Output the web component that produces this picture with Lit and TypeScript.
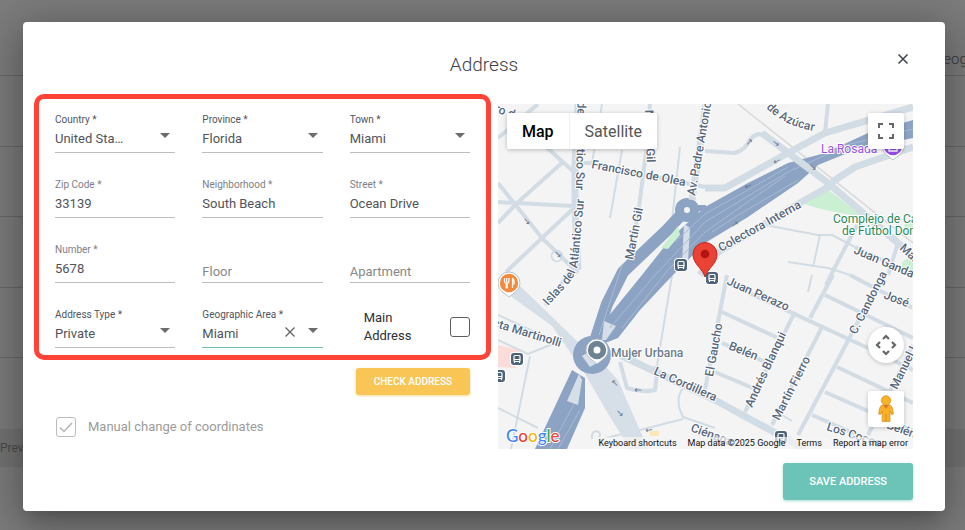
import { LitElement, html, svg, css } from "lit";
import { customElement, property } from "lit/decorators.js";

type Label = [text: string, x: number, y: number, angle: number, anchor?: string];

/* Street geometry, grouped by stroke weight. */
const THIN_ROADS = [
  "M602 104L592 163", "M622 150L610 218", "M680 147L672 220",
  "M765 225L818 235H832L855 247", "M820 235L813 267", "M788 262L828 268L850 275",
  "M812 275L808 292", "M530 356L511 449", "M498 408L538 428", "M498 340L528 354L555 343",
  "M672 275L657 366Q648 372 620 356", "M683 388Q674 400 683 417L715 428",
  "M683 419L640 430L597 440", "M782 415L792 421", "M498 315L535 332",
];
const ROADS = [
  "M498 183L542 238L578 273", "M563 162L517 203L498 223", "M498 202L517 203L573 206",
  "M545 146L574 172", "M575 207L542 238L506 272", "M498 138L538 104",
  "M574 163H590L690 184L705 187", "M650 104L647 145L638 215L628 262",
  "M828 103L825 133", "M855 247L913 275", "M857 225L835 267L826 285", "M898 243L888 275",
  "M725 282L868 348L913 370", "M727 275L705 390", "M722 312L778 338", "M722 343L765 362",
  "M715 372L755 389", "M795 312L745 412", "M823 325L772 425", "M833 275L810 318",
  "M882 275L850 337L798 435", "M825 295L913 338", "M850 275L913 308", "M837 367L913 403",
  "M825 392L913 431", "M812 415L890 449", "M913 345L868 435", "M545 305L553 296L572 268",
  "M620 362L627 388Q642 393 655 390L658 366", "M705 151L735 153Q745 150 750 140Q757 130 768 137",
];
const WIDE_ROADS = [
  "M578 104L575 165V207L578 270", "M706 104L692 200", "M705 188H725L788 153L825 133L913 107",
  "M762 133L828 183L898 243L913 257", "M832 182L855 167L913 147", "M830 186L798 204L715 254L700 275",
  "M620 355L715 400L805 449",
];

const HIGHWAY = [
  "M913 120L868 133L825 153L788 163L748 183L705 207L672 237L642 275L607 318L600 345L618 338L640 310L672 276L705 243L748 217L798 183L818 165L855 150L913 138Z",
  "M572 370L535 449H567L585 408V378Z",
];
const LANES = [
  "M913 129L850 144L788 172L705 222L655 275L610 328", "M785 176L705 232L668 270L622 328",
  "M788 167L748 190L705 214L675 242", "M622 265L610 302L599 335", "M580 410L558 449", "M574 404L550 449",
  "M798 180L740 214L712 232",
];

const STREETS: Label[] = [
  ["Francisco de Olea", 591, 168, 11],
  ["Martín Gil", 633, 260, -79],
  ["Martín Gil", 645, 110, 88],
  ["Islas del Atlántico Sur", 576, 190, 91, "end"],
  ["Av. Padre Antonio", 695, 196, -80],
  ["Colectora Interna", 721, 252, -29],
  ["Juan Gandasegui", 853, 253, 23],
  ["Mar Chiquita", 899, 249, 42],
  ["Juan Perazo", 726, 284, 24],
  ["José Villegas", 883, 298, 21],
  ["C. Candonga", 856, 335, -63],
  ["Manuel Lucero", 897, 390, -64],
  ["Andrés Blanqui", 752, 408, -65],
  ["Martín Fierro", 779, 421, -63],
  ["El Gaucho", 713, 377, -80],
  ["Belén", 728, 349, 22],
  ["Belén", 886, 428, 20],
  ["Los Cocos", 826, 430, 18],
  ["Ciénaga", 690, 431, 20],
  ["La Cordillera", 653, 374, 24],
  ["Recta Martinolli", 560, 347, 17, "end"],
  ["Cerro de", 498, 113, 20, "middle"],
];

const ARROWS: Label[] = [
  ["→", 527, 221, 52], ["→", 558, 254, 45], ["→", 749, 142, -50], ["→", 776, 143, 40],
  ["←", 777, 161, -25], ["←", 748, 186, -20], ["←", 615, 383, 50], ["←", 638, 390, 2],
  ["→", 620, 413, 45], ["←", 649, 430, -10], ["→", 735, 224, -40], ["→", 813, 167, 45],
];

@customElement("address-map")
export class AddressMap extends LitElement {
  static styles = css`
    :host { display: block; position: relative; height: 345px; overflow: hidden; background: #f5f4f5; font-family: Roboto, "Noto Sans", sans-serif; }
    .canvas { display: block; width: 100%; height: 100%; }
    .road { fill: none; stroke: #d2dce4; stroke-linejoin: round; }
    .w2 { stroke-width: 2; }
    .w4 { stroke-width: 4; }
    .w7 { stroke-width: 7; }
    .highway { fill: #8ca3c4; }
    .ramp { fill: none; stroke: #8ca3c4; }
    .lane { fill: none; stroke: #a9bad4; stroke-width: 1; }
    .street { font-size: 12px; font-weight: 500; fill: #56677c; stroke: #fff; stroke-width: 2px; paint-order: stroke; stroke-linejoin: round; }
    .park { fill: #28895a; font-weight: 400; }
    .shop { fill: #9350e6; font-weight: 400; }
    .poi { fill: #6b7d8b; }
    .arrow { font: 9px "DejaVu Sans", sans-serif; fill: #68788a; text-anchor: middle; dominant-baseline: central; }
    button { border: 0; padding: 0; margin: 0; background: #fff; font: inherit; color: #565656; }
    .types { position: absolute; left: 9px; top: 9px; display: flex; height: 36px; box-shadow: 0 1px 4px rgba(0, 0, 0, 0.25); border-radius: 2px; overflow: hidden; font-size: 16px; }
    .types button { padding: 0 15px; }
    .types button:first-child { font-weight: 500; color: #000; border-right: 1px solid #eee; }
    .tools { position: absolute; top: 9px; right: 9px; bottom: 22px; display: flex; flex-direction: column; gap: 28px; }
    .tools button { display: grid; place-items: center; width: 36px; height: 36px; border-radius: 2px; box-shadow: 0 1px 4px rgba(0, 0, 0, 0.22); }
    .tools .camera { margin-top: auto; border-radius: 50%; }
    .logo { position: absolute; left: 8px; bottom: 3px; font: 500 17px/20px Lato, sans-serif; -webkit-text-stroke: 2px #fff; paint-order: stroke; text-decoration: none; }
    .b { color: #4285f4; } .r { color: #ea4335; } .y { color: #f2b50a; } .g { color: #34a853; }
    .legal { position: absolute; right: 0; bottom: 0; display: flex; gap: 11px; padding: 0 5px; font-size: 9px; line-height: 12px; background: rgba(245, 245, 245, 0.7); }
    .legal a, .legal button, .legal span { color: #111; text-decoration: none; background: none; white-space: nowrap; }
  `;

  private label(cls: string, [text, x, y, angle, anchor = "start"]: Label) {
    return svg`<text class=${cls} text-anchor=${anchor} transform="translate(${x} ${y}) rotate(${angle})">${text}</text>`;
  }

  private bus(x: number, y: number) {
    return svg`<g transform="translate(${x} ${y})">
      <rect x="-7" y="-7" width="14" height="14" rx="4" fill="#fff"></rect>
      <rect x="-6" y="-6" width="12" height="12" rx="3" fill="#4d6379"></rect>
      <rect x="-3" y="-3.5" width="6" height="6" rx="1" fill="none" stroke="#fff" stroke-width="1.2"></rect>
      <path d="M-3 0.5H3M-2.5 2V4M2.5 2V4" stroke="#fff" stroke-width="1.2"></path>
    </g>`;
  }

  private pin(x: number, y: number, color: string, glyph: unknown) {
    return svg`<g transform="translate(${x} ${y})">
      <path d="M0 14L-7 8.5A11 11 0 1 1 7 8.5Z" fill="#fff" stroke="#aab2ba" stroke-width=".8"></path>
      <circle r="9.2" fill=${color}></circle>${glyph}
    </g>`;
  }

  render() {
    const lines = (paths: string[], cls: string) => paths.map((d) => svg`<path class=${cls} d=${d}></path>`);
    return html`
      <svg class="canvas" viewBox="498 104 415 345" preserveAspectRatio="xMidYMid slice" role="img" aria-label="Map of the address">
        <path d="M498 345L520 350L516 368L498 367Z" fill="#fbdcd8"></path>
        <path d="M802 203L826 188L862 216Q825 212 802 203Z" fill="#cbefd3"></path>
        <path d="M904 225L913 220V234H906ZM902 262L913 255V275L902 268Z" fill="#cbefd3"></path>
        <path d="M650 431h9v5h-9z" fill="#fbe6b8"></path>
        <path d="M738 104L913 243" stroke="#d8d8d8" stroke-width="1.5"></path>
        ${lines(THIN_ROADS, "road w2")} ${lines(ROADS, "road w4")}
        <path d="M505 284L520 286L578 342L584 362L574 358L552 326L505 292Z" fill="#d6dfe7"></path>
        <path d="M584 372L605 366L618 380L648 449H630L607 412Z" fill="#d6dfe7"></path>
        ${lines(HIGHWAY, "highway")}
        <path class="ramp" stroke-width="12" d="M680 216L667 230L623 272L607 304L596 338"></path>
        <path class="ramp" stroke-width="6" d="M690 208H706"></path>
        <circle cx="687" cy="210" r="12" fill="#8ca3c4"></circle>
        <circle cx="687" cy="210" r="3" fill="#f4f3f4"></circle>
        <circle cx="592" cy="355" r="19" fill="#8ca3c4"></circle>
        <path d="M684 224L690 228L688 262H682Z" fill="#d6dfe7"></path>
        <path d="M678 226L680 235L668 249L661 248Z" fill="#cbefd3"></path>
        <path d="M604 321L616 326L606 340H602Z" fill="#d6dfe7"></path>
        <path d="M579 374L567 401L578 405L582 380Z" fill="#d6dfe7"></path>
        <path d="M582 356L592 350L602 360L590 367Z" fill="#d6dfe7"></path>
        ${lines(LANES, "lane")} ${lines(WIDE_ROADS, "road w7")}
        <circle cx="557" cy="256" r="5.5" fill="none" stroke="#d0dae2" stroke-width="1.5"></circle>
        <path d="M592 439q-1-7 4-8 6 1 3 7" fill="none" stroke="#d0dae2" stroke-width="2"></path>
        ${ARROWS.map((a) => this.label("arrow", a))}
        ${STREETS.map((s) => this.label("street", s))}
        <path id="islas" d="M548 306L569 283Q577 273 578 262L585 190" fill="none"></path>
        <text class="street"><textPath href="#islas">Islas del Atlántico Sur</textPath></text>
        <path id="azucar" d="M766 108Q788 130 830 133" fill="none"></path>
        <text class="street"><textPath href="#azucar">de Azúcar</textPath></text>
        <text class="street shop" x="821" y="153">La Rosada</text>
        <text class="street park" x="833" y="223">Complejo de Canchas</text>
        <text class="street park" x="842" y="235">de Fútbol Domingo</text>
        <text class="street poi" x="611" y="357">Mujer Urbana</text>
        ${this.bus(681, 265)} ${this.bus(712, 278)} ${this.bus(517, 359)} ${this.bus(499, 376)} ${this.bus(781, 437)}
        ${this.pin(893, 146, "#9350e6", svg`<path d="M-4 5V-1H4V5Z M-2 -1a2 2 0 0 1 4 0" fill="none" stroke="#fff" stroke-width="1.3"></path>`)}
        ${this.pin(509, 283, "#f58a3c", svg`<path d="M-4.5-5v3q0 2 1.700 2V5h1V0q1.700 0 1.700-2V-5M-2.300-5V-1M3.500-5V5M3.500-5q2 2 1.500 6h-1.500" fill="none" stroke="#fff" stroke-width="1.200"></path>`)}
        ${this.pin(597, 350, "#6d8593", svg`<circle r="3.500" fill="#fff"></circle>`)}
        <path d="M705 277C703 269 693 264 693 254.500A12 12 0 0 1 717 254.500C717 264 707 269 705 277Z" fill="#ea4335" stroke="#c5221f" stroke-width="1"></path>
        <circle cx="705" cy="254" r="4.300" fill="#b31412"></circle>
      </svg>
      <div class="types"><button>Map</button><button>Satellite</button></div>
      <div class="tools">
        <button aria-label="Full screen">
          <svg width="18" height="18" fill="none" stroke="#666" stroke-width="2"><path d="M2 6V2H6M12 2H16V6M16 12V16H12M6 16H2V12"></path></svg>
        </button>
        <button class="camera" aria-label="Camera controls">
          <svg width="22" height="22" fill="none" stroke="#666" stroke-width="2.200"><path d="M8 5L11 2L14 5M8 17L11 20L14 17M5 8L2 11L5 14M17 8L20 11L17 14"></path></svg>
        </button>
        <button aria-label="Street View">
          <svg width="16" height="28" viewBox="0 0 16 28">
            <path d="M4 10H12Q14 11 14.500 14L15.300 19L13.500 19.500L12 16V26.500H4.200V16L2.600 19.500L.7 19L1.500 14Q2 11 4 10Z" fill="#f9b125" stroke="#d48a1b" stroke-width=".7"></path>
            <circle cx="8" cy="5.500" r="4.700" fill="#f9b125" stroke="#d48a1b" stroke-width=".7"></circle>
            <path d="M5 10H11L8 14Z" fill="#e3742f"></path><path d="M8 19V26" stroke="#d48a1b"></path>
          </svg>
        </button>
      </div>
      <a class="logo" href="#" aria-label="Google"><span class="b">G</span><span class="r">o</span><span class="y">o</span><span class="b">g</span><span class="g">l</span><span class="r">e</span></a>
      <div class="legal">
        <button>Keyboard shortcuts</button><span>Map data ©2025 Google</span><a href="#">Terms</a><a href="#">Report a map error</a>
      </div>
    `;
  }
}

@customElement("form-field")
export class FormField extends LitElement {
  @property() label = "";
  @property() value = "";
  @property() kind: "text" | "select" = "text";
  @property({ type: Boolean }) clearable = false;

  static styles = css`
    :host { display: block; min-width: 0; font-family: Roboto, "Noto Sans", sans-serif; }
    .field { position: relative; display: flex; flex-direction: column; box-sizing: border-box; height: 42px; padding-top: 2px; border-bottom: 1px solid #bdbdbd; }
    .active { border-color: #6dbfb0; }
    label { font-size: 10px; line-height: 14px; color: #7d8085; white-space: nowrap; }
    .select label { color: #50545c; }
    input, select { appearance: none; flex: none; box-sizing: border-box; width: 100%; height: 24px; margin: 0; padding: 0; border: 0; border-radius: 0; outline: 0; background: none; font: 13px/24px Roboto, "Noto Sans", sans-serif; color: #50535a; }
    input::placeholder { color: #85888c; opacity: 1; }
    .empty { justify-content: flex-end; }
    .empty input { height: 20px; line-height: 20px; }
    select { padding-right: 50px; text-overflow: ellipsis; white-space: nowrap; overflow: hidden; }
    .select::after { content: ""; position: absolute; right: 5px; top: 22px; border: 5px solid transparent; border-top-color: #6c6c6c; border-bottom: 0; pointer-events: none; }
    button { position: absolute; right: 27px; top: 20px; width: 12px; height: 12px; padding: 0; border: 0; background: none; }
    button svg { display: block; }
  `;

  render() {
    if (this.kind === "select") {
      return html`<div class="field select ${this.clearable ? "active" : ""}">
        <label for="control">${this.label}</label>
        <select id="control"><option>${this.value}</option></select>
        ${this.clearable
          ? html`<button aria-label="Clear"><svg width="12" height="12" stroke="#666" stroke-width="1.400"><path d="M1.500 1.500L10.500 10.500M10.500 1.500L1.500 10.500"></path></svg></button>`
          : ""}
      </div>`;
    }
    return this.value
      ? html`<div class="field"><label for="control">${this.label}</label><input id="control" .value=${this.value} /></div>`
      : html`<div class="field empty"><input aria-label=${this.label} placeholder=${this.label} /></div>`;
  }
}

@customElement("app-root")
export class AppRoot extends LitElement {
  static styles = css`
    :host { display: grid; min-height: 100vh; font-family: Roboto, "Noto Sans", sans-serif; overflow: hidden; }
    .page, .dialog { grid-area: 1 / 1; min-width: 0; }
    .page { background: #7d7d7d; color: #36383b; font-size: 15px; overflow: hidden; }
    .head { display: flex; justify-content: flex-end; align-items: flex-end; height: 76px; box-sizing: border-box; padding-bottom: 5px; line-height: 22px; border-bottom: 1px solid #686868; font-weight: 300; }
    .head span { width: 32px; white-space: nowrap; }
    .row { height: 70px; border-bottom: 1px solid #686868; box-sizing: border-box; }
    .row:nth-of-type(odd) { height: 71px; }
    .row:last-of-type { border: 0; }
    .pager { height: 38px; line-height: 38px; background: #747474; font-size: 12px; color: #4b4b4b; }
    .dialog { position: relative; display: flex; flex-direction: column; box-sizing: border-box; margin: 22px 20px 19px 23px; padding: 0 32px 11px 11px; background: #fff; border-radius: 4px; box-shadow: 0 11px 15px -7px rgba(0, 0, 0, 0.2), 0 9px 46px 8px rgba(0, 0, 0, 0.3); }
    h1 { margin: 32px 0 18px 21px; text-align: center; font-size: 19px; line-height: 22px; font-weight: 300; color: #3d424b; }
    .close { position: absolute; top: 31px; right: 36px; width: 12px; height: 12px; padding: 0; border: 0; background: none; }
    .close svg { display: block; }
    .body { display: grid; grid-template-columns: minmax(0, 457fr) minmax(0, 415fr); column-gap: 7px; }
    address-map { margin-top: 10px; }
    .fields { display: grid; grid-template-columns: repeat(3, minmax(0, 1fr)); column-gap: 27px; row-gap: 23px; padding: 12px 16px 7px; border: 5px solid #ff4336; border-radius: 10px; }
    .main { display: flex; justify-content: space-between; align-items: center; padding-left: 14px; font-size: 13px; line-height: 18px; color: #2c2f33; }
    .main span { width: 56px; }
    input { appearance: none; flex: none; width: 20px; height: 20px; margin: 0; border: 1px solid #5e5e5e; border-radius: 3px; background: #fff; }
    .tick { display: grid; }
    .tick input, .tick svg { grid-area: 1 / 1; }
    .tick input { border-color: #bcbcbc; }
    .action { border: 0; border-radius: 3px; color: #fff; font-family: inherit; font-weight: 500; }
    .check { display: block; height: 27px; margin: 8px 21px 0 auto; padding: 0 18px; font-size: 10px; background: #f9c555; box-shadow: 0 1px 3px rgba(249, 197, 85, 0.6); }
    .manual { display: flex; align-items: center; gap: 12px; margin: 22px 0 0 22px; font-size: 13px; line-height: 20px; color: #9b9b9b; }
    .save { align-self: flex-end; height: 37px; margin-top: 14px; padding: 0 26px; font-size: 11px; background: #6cc3b7; box-shadow: 0 1px 3px rgba(108, 195, 183, 0.6); }
  `;

  render() {
    return html`
      <div class="page">
        <header class="head"><span>Geographic</span></header>
        <div class="row"></div><div class="row"></div><div class="row"></div><div class="row"></div><div class="row"></div>
        <footer class="pager">Previous</footer>
      </div>
      <main class="dialog" role="dialog" aria-labelledby="title">
        <button class="close" aria-label="Close">
          <svg width="12" height="12" stroke="#3d424b" stroke-width="1.500"><path d="M1.500 1.500L10.500 10.500M10.500 1.500L1.500 10.500"></path></svg>
        </button>
        <h1 id="title">Address</h1>
        <div class="body">
          <form @submit=${(e: Event) => e.preventDefault()}>
            <div class="fields">
              <form-field kind="select" label="Country *" value="United States"></form-field>
              <form-field kind="select" label="Province *" value="Florida"></form-field>
              <form-field kind="select" label="Town *" value="Miami"></form-field>
              <form-field label="Zip Code *" value="33139"></form-field>
              <form-field label="Neighborhood *" value="South Beach"></form-field>
              <form-field label="Street *" value="Ocean Drive"></form-field>
              <form-field label="Number *" value="5678"></form-field>
              <form-field label="Floor"></form-field>
              <form-field label="Apartment"></form-field>
              <form-field kind="select" label="Address Type *" value="Private"></form-field>
              <form-field kind="select" label="Geographic Area *" value="Miami" clearable></form-field>
              <label class="main"><span>Main Address</span><input type="checkbox" /></label>
            </div>
            <button class="action check">CHECK ADDRESS</button>
            <label class="manual">
              <span class="tick"><input type="checkbox" checked disabled />
                <svg width="20" height="20" fill="none" stroke="#b5b5b5" stroke-width="1.500"><path d="M4 10.500L8 14.500L16 6"></path></svg></span>
              Manual change of coordinates
            </label>
          </form>
          <address-map></address-map>
        </div>
        <button class="action save">SAVE ADDRESS</button>
      </main>
    `;
  }
}
